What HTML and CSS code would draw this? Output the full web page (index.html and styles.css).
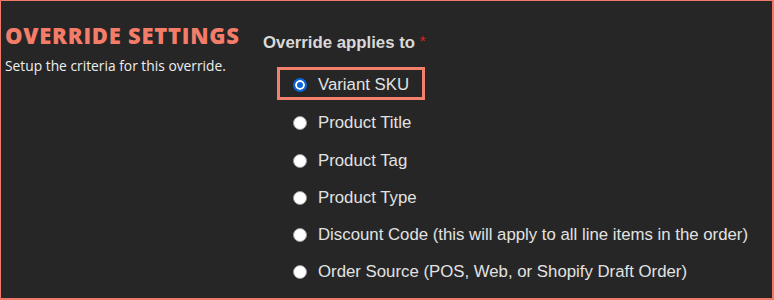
FILE: index.html
```html
<!DOCTYPE html>
<html>
<head>
<meta charset="utf-8">
<link rel="stylesheet" href="styles.css">
</head>
<body>
<div class="frame">
  <div class="intro">
    <h2 class="title">OVERRIDE SETTINGS</h2>
    <p class="subtitle">Setup the criteria for this override.</p>
  </div>
  <div class="field">
    <div class="label">Override applies to <span class="req">*</span></div>
    <ul class="options">
      <li class="option highlighted"><span class="radio checked"></span>Variant SKU</li>
      <li class="option"><span class="radio"></span>Product Title</li>
      <li class="option"><span class="radio"></span>Product Tag</li>
      <li class="option"><span class="radio"></span>Product Type</li>
      <li class="option"><span class="radio"></span>Discount Code (this will apply to all line items in the order)</li>
      <li class="option"><span class="radio"></span>Order Source (POS, Web, or Shopify Draft Order)</li>
    </ul>
  </div>
</div>
</body>
</html>
```

FILE: styles.css
```css
html, body { margin: 0; padding: 0; background: #262626; }
.frame {
  box-sizing: border-box;
  width: 774px;
  height: 300px;
  background: #262626;
  border-style: solid;
  border-color: #f07b68;
  border-width: 1px 2px 2px 1px;
  display: flex;
  overflow: hidden;
}
.intro { width: 258px; padding-left: 4px; padding-top: 21px; box-sizing: border-box; flex: none; }
.title {
  margin: 0;
  font-family: "Open Sans", sans-serif;
  font-weight: 800;
  font-size: 22px;
  line-height: 26px;
  color: #f47d69;
  letter-spacing: 0.75px;
  white-space: nowrap;
}
.subtitle {
  margin: 9px 0 0;
  font-family: "Open Sans", sans-serif;
  font-size: 13.8px;
  line-height: 18px;
  color: #eeeeee;
  white-space: nowrap;
}
.field { padding-top: 30px; padding-left: 4px; }
.label {
  font-family: "Liberation Sans", Arial, sans-serif;
  font-weight: bold;
  font-size: 16.8px;
  line-height: 20px;
  color: #d9d9d9;
}
.req { color: #e02020; font-weight: normal; font-size: 15px; vertical-align: 2px; }
.options { list-style: none; margin: 14px 0 0; padding: 0 0 0 14px; }
.option {
  box-sizing: border-box;
  display: flex;
  align-items: center;
  height: 33px;
  margin-bottom: 4.3px;
  padding-top: 5px;
  padding-left: 16px;
  font-family: "Liberation Sans", Arial, sans-serif;
  font-size: 16.8px;
  color: #e2e2e2;
  white-space: nowrap;
}
.option.highlighted {
  width: 148px;
  border: 3px solid #f2806d;
  padding-top: 2px;
  padding-left: 13px;
}
.radio {
  box-sizing: border-box;
  width: 14px;
  height: 14px;
  border-radius: 50%;
  background: #ffffff;
  border: 1px solid #9a9a9a;
  margin-right: 11px;
  flex: none;
}
.radio.checked {
  background: #0b63d8;
  border: 2px solid #0b63d8;
  box-shadow: inset 0 0 0 2px #ffffff;
}
```
